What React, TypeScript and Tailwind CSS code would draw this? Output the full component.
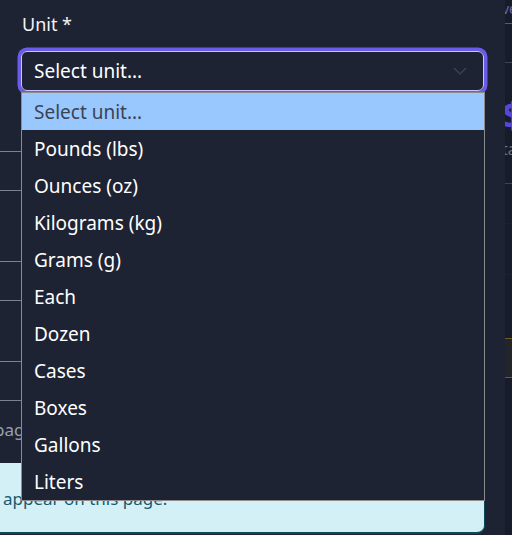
const units = [
  "Select unit...",
  "Pounds (lbs)",
  "Ounces (oz)",
  "Kilograms (kg)",
  "Grams (g)",
  "Each",
  "Dozen",
  "Cases",
  "Boxes",
  "Gallons",
  "Liters",
];

function Chevron() {
  return (
    <svg width="14" height="9" viewBox="0 0 14 9" fill="none" className="text-[#3e4458]">
      <polyline points="1,1 7,7 13,1" stroke="currentColor" strokeWidth="1.2" />
    </svg>
  );
}

function UnitList() {
  return (
    <div className="absolute left-[21px] top-[92px] w-[464px] border border-[#8c8c8c] bg-[#1e2333]">
      {units.map((u, i) => (
        <div
          key={u}
          className={
            i === 0
              ? "flex h-[37px] items-center bg-[#99c8ff] px-[12px] pt-[2px] text-[19px] text-[#3d4250]"
              : "flex h-[37px] items-center px-[12px] pt-[2px] text-[19px] text-white"
          }
        >
          {u}
        </div>
      ))}
    </div>
  );
}

function SidePeek() {
  return (
    <div className="flex-1 overflow-hidden bg-[#181c2a]">
      <div className="-ml-[3px] w-[60px]">
        <div className="h-[24px] border-b border-[#5a5490] text-[14px] leading-[18px] text-[#6c68a8]">
          ve
        </div>
        <div className="h-[39px] border-b border-[#3f4456]" />
        <div className="mt-[32px] text-[36px] font-bold leading-[40px] text-[#5847d6]">$</div>
        <div className="mt-[3px] text-[16px] leading-[22px] text-[#6b7080]">ta</div>
        <div className="mt-[23px] h-[41px] border-t border-[#3f4456] border-b border-b-[#1d2131]" />
        <div className="h-[51px] border-b border-[#1d2131]" />
        <div className="mt-[63px] h-[40px] border-y border-[#6b5d1e] bg-[#232529]" />
      </div>
    </div>
  );
}

export default function App() {
  return (
    <div
      className="relative flex h-[535px] w-[512px] overflow-hidden bg-[#1e2333]"
      style={{ fontFamily: '"Noto Sans", "Open Sans", sans-serif' }}
    >
      <div className="relative flex w-[505px] flex-col">
        <div className="pl-[22px] pt-[10px] text-[18px] leading-[28px] text-[#f4f4f6]">
          Unit *
        </div>

        <div className="mx-[21px] mt-[13px] flex h-[40px] items-center justify-between rounded-[6px] border border-[#cdc4ff] pl-[12px] pr-[16px] shadow-[0_0_0_3.5px_#6b5be8]">
          <span className="text-[19px] text-white">Select unit...</span>
          <Chevron />
        </div>

        <div className="mt-[60px] h-[40px] w-[300px] border-y border-[#7d8190]" />
        <div className="mt-[70px] h-[40px] w-[300px] border-y border-[#7d8190]" />
        <div className="mt-[60px] h-[40px] w-[300px] border-y border-[#7d8190]" />

        <div className="-ml-[6px] mt-[17px] text-[17px] leading-[24px] text-[#9aa0ad]">page</div>

        <div className="mt-[21px] h-[71px] w-[485px] rounded-br-[8px] border-r border-b-2 border-[#0c4a5a] bg-[#d3f0f7] pl-[3px] pt-[24px] text-[17px] leading-[24px] text-[#175a6d]">
          appear on this page.
        </div>

        <UnitList />
      </div>
      <SidePeek />
    </div>
  );
}
